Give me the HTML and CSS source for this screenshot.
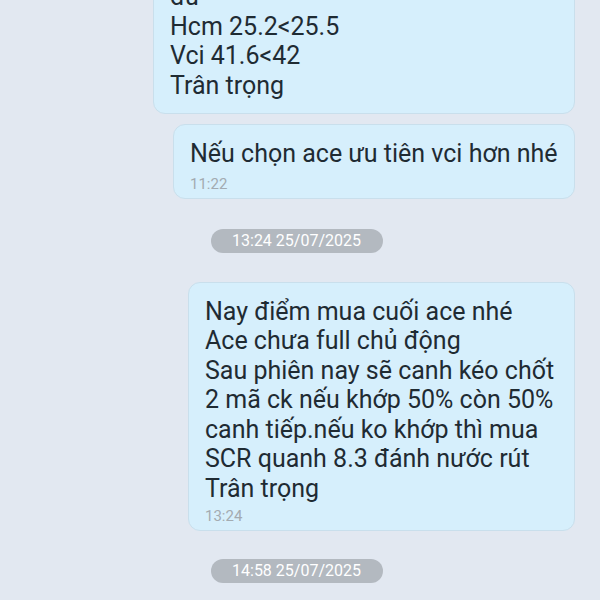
FILE: index.html
```html
<!DOCTYPE html>
<html lang="vi">
  <head>
    <meta charset="UTF-8" />
    <meta name="viewport" content="width=device-width, initial-scale=1.0" />
    <title>Chat</title>
    <link rel="stylesheet" href="styles.css">
  </head>
  <body>
    <div class="chat">
      <div class="msg msg-first">
        <p class="msg-text">đủ<br />Hcm 25.2&lt;25.5<br />Vci 41.6&lt;42<br />Trân trọng</p>
      </div>

      <div class="msg msg-short">
        <p class="msg-text">Nếu chọn ace ưu tiên vci hơn nhé</p>
        <span class="msg-time">11:22</span>
      </div>

      <div class="date-pill">13:24 25/07/2025</div>

      <div class="msg msg-long">
        <p class="msg-text">Nay điểm mua cuối ace nhé<br />Ace chưa full chủ động<br />Sau phiên nay sẽ canh kéo chốt<br />2 mã ck nếu khớp 50% còn 50%<br />canh tiếp.nếu ko khớp thì mua<br />SCR quanh 8.3 đánh nước rút<br />Trân trọng</p>
        <span class="msg-time">13:24</span>
      </div>

      <div class="date-pill">14:58 25/07/2025</div>
    </div>
  </body>
</html>
```

FILE: styles.css
```css
* {
  margin: 0;
  padding: 0;
  box-sizing: border-box;
}
html,
body {
  height: 100%;
  overflow: hidden;
}
body {
  font-family: Roboto, "Noto Sans", sans-serif;
  background: #e2e8f1;
  color: #1f2b33;
}
.chat {
  display: flex;
  flex-direction: column;
  align-items: flex-end;
  padding: 0 25px 0 20px;
  margin-top: -33px;
}
.msg {
  background: #d6effc;
  border: 1px solid #c9dfec;
  border-radius: 12px;
  padding: 14px 16px 5px;
}
.msg-text {
  font-size: 25px;
  line-height: 29.5px;
}
.msg-time {
  display: block;
  font-size: 15px;
  line-height: 18px;
  color: #a3abb1;
  margin-top: 6px;
}
.msg-first {
  width: 422px;
  padding-bottom: 13px;
}
.msg-short {
  width: 402px;
  margin-top: 10px;
}
.msg-long {
  width: 387px;
  margin-top: 29px;
}
.msg-long .msg-time {
  margin-top: 4px;
}
.date-pill {
  align-self: center;
  margin: 30px 0 0 -2px;
  width: 172px;
  height: 24px;
  border-radius: 12px;
  background: #b3b9c0;
  color: #fff;
  font-size: 16px;
  line-height: 24px;
  text-align: center;
}
.msg-long + .date-pill {
  margin-top: 28px;
}
```
